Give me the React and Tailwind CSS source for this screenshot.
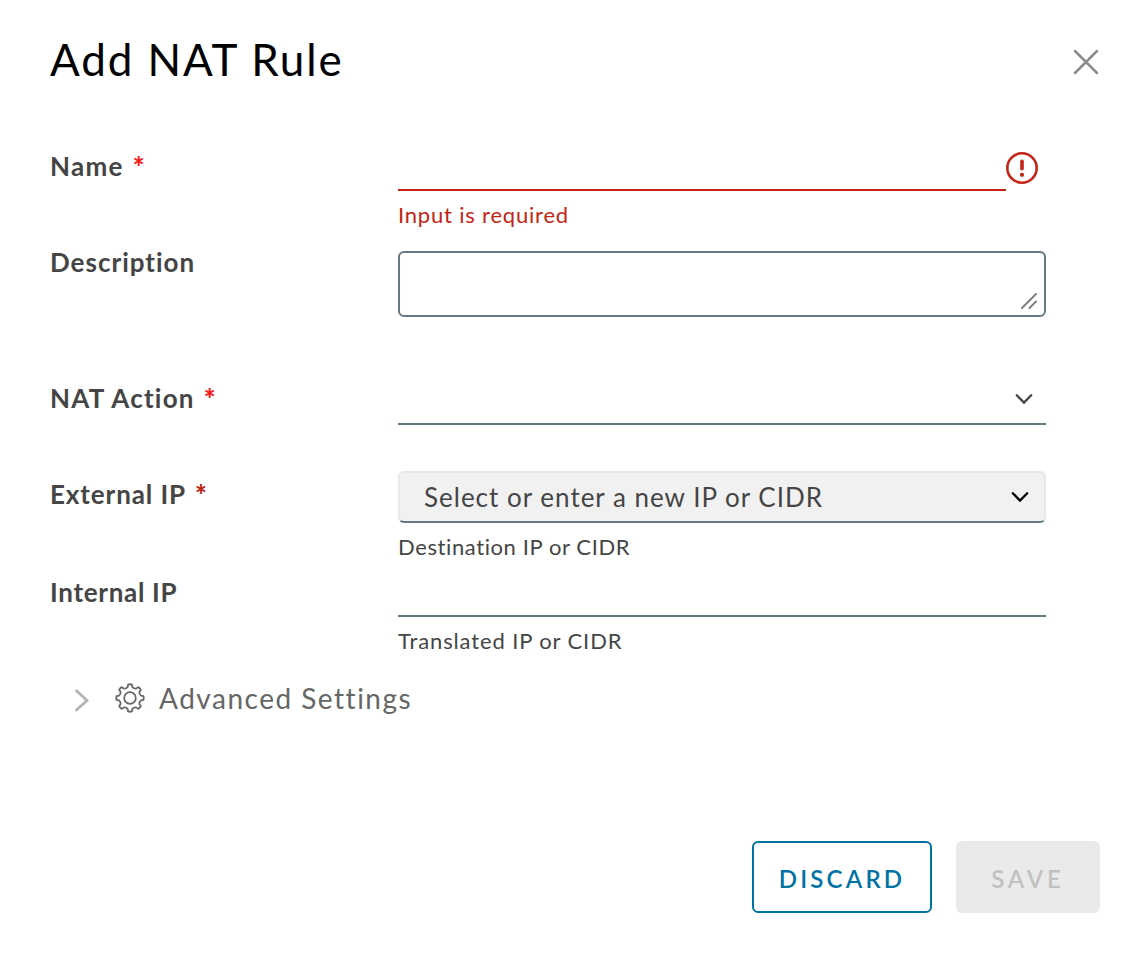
import React, { useState } from 'react';
import clsx from 'clsx';

// Outline of a cog with 8 rounded teeth, centred on 0,0
const cogPath = () => {
  const point = (radius, deg) => {
    const rad = (deg * Math.PI) / 180;
    return `${(radius * Math.sin(rad)).toFixed(2)} ${(-radius * Math.cos(rad)).toFixed(2)}`;
  };

  let d = `M${point(13.6, -8)}`;
  for (let i = 0; i < 8; i++) {
    const a = i * 45;
    d += `Q${point(14, a)} ${point(13.6, a + 8)}`;
    d += `L${point(11.2, a + 12)}`;
    d += `Q${point(9.9, a + 22.5)} ${point(11.2, a + 33)}`;
    d += `L${point(13.6, a + 37)}`;
  }
  return d + 'Z';
};

const CogIcon = () => (
  <svg className="w-[30px] h-[30px]" viewBox="-15 -15 30 30" fill="none" stroke="#666" strokeWidth="1.8" strokeLinejoin="round">
    <path d={cogPath()} />
    <circle r="5.8" />
  </svg>
);

const CloseIcon = () => (
  <svg className="w-7 h-7" viewBox="0 0 28 28" fill="none" stroke="#8c8c8c" strokeWidth="2.5" strokeLinecap="round">
    <path d="M3 3 25 25M25 3 3 25" />
  </svg>
);

const ErrorIcon = () => (
  <svg className="w-8 h-8 shrink-0" viewBox="0 0 32 32" fill="none" stroke="#c32416">
    <circle cx="16" cy="16" r="14.7" strokeWidth="2.6" />
    <path d="M16 9.3v7.4" strokeWidth="3.6" strokeLinecap="round" />
    <circle cx="16" cy="22.8" r="2.1" fill="#c32416" stroke="none" />
  </svg>
);

const ChevronDown = ({ className }) => (
  <svg className={clsx('w-5 h-5', className)} viewBox="0 0 20 20" fill="none" stroke="currentColor" strokeWidth="2.3" strokeLinecap="round">
    <path d="m2.8 6.3 7.2 7.2 7.2-7.2" />
  </svg>
);

const FormRow = ({ label, required, requiredColor = 'text-[#ff1a1a]', labelClass, className, children }) => (
  <div className={clsx('flex', className)}>
    <label className="w-[348px] h-[50px] shrink-0 flex items-center font-bold text-[26px] text-[#454545]">
      <span className={labelClass}>{label}</span>
      {required && <span className={clsx('ml-[9px] text-[28px] font-black', requiredColor)}>*</span>}
    </label>
    <div className="w-[648px]">{children}</div>
  </div>
);

const App = () => {
  const [open, setOpen] = useState(false);

  return (
    <div className="w-[1142px] h-[954px] bg-white px-[50px] font-['Lato',sans-serif]">
      <header className="h-[141px] pt-[29px] flex justify-between">
        <h1 className="h-[60px] leading-[60px] text-[44px] tracking-[1.9px] text-black whitespace-nowrap">Add NAT Rule</h1>
        <button className="w-7 h-7 mt-[19px] -mr-2" aria-label="Close">
          <CloseIcon />
        </button>
      </header>

      <FormRow label="Name" required labelClass="tracking-[1.3px]" className="h-[96px]">
        <div className="flex h-[50px]">
          <input className="w-[608px] h-[50px] border-b-2 border-[#c32416] outline-none" />
          <div className="pt-[11px]">
            <ErrorIcon />
          </div>
        </div>
        <p className="h-[50px] leading-[48px] text-[22px] tracking-[0.8px] text-[#c32416]">Input is required</p>
      </FormRow>

      <FormRow label="Description" labelClass="tracking-[1px]" className="h-[136px]">
        <div className="mt-[14px] h-[66px] border-2 border-[#667a84] rounded-md flex items-end justify-end py-[5px] pr-[6px]">
          <svg className="w-[18px] h-[18px]" viewBox="0 0 18 18" fill="none" stroke="#808080" strokeWidth="2" strokeLinecap="round">
            <path d="M2 16 16 2M9.5 16 16 9.5" />
          </svg>
        </div>
      </FormRow>

      <FormRow label="NAT Action" required labelClass="tracking-[1.2px]" className="h-[96px]">
        <div className="h-[52px] border-b-2 border-[#667a84] flex items-center justify-end pr-3 pt-[2px]">
          <ChevronDown className="text-[#454545]" />
        </div>
      </FormRow>

      <FormRow label="External IP" required requiredColor="text-[#c32416]" labelClass="tracking-[0.9px]" className="h-[98px]">
        <div className="mt-[2px] h-[52px] bg-[#f1f1f1] border-2 border-[#e8e8e8] border-b-[#667a84] rounded-md flex items-center justify-between pl-6 pr-[14px]">
          <span className="text-[26px] tracking-[1px] text-[#454545] whitespace-nowrap">Select or enter a new IP or CIDR</span>
          <ChevronDown className="text-black" />
        </div>
        <p className="h-[50px] leading-[48px] text-[22px] tracking-[0.6px] text-[#454545]">Destination IP or CIDR</p>
      </FormRow>

      <FormRow label="Internal IP" labelClass="tracking-[0.7px]" className="h-[100px]">
        <input className="block w-full h-[50px] border-b-2 border-[#667a84] outline-none" />
        <p className="h-[50px] leading-[48px] text-[22px] tracking-[0.88px] text-[#454545]">Translated IP or CIDR</p>
      </FormRow>

      <button className="h-[62px] flex items-center pl-[22px]" onClick={() => setOpen(!open)}>
        <svg className="w-5 h-6 mt-[3px]" viewBox="0 0 20 24" fill="none" stroke="#b3b3b3" strokeWidth="2.8" strokeLinecap="round">
          <path d="m4.5 2.8 10.5 9.7L4.5 22" />
        </svg>
        <span className="ml-[23px] mr-[14px]">
          <CogIcon />
        </span>
        <span className="text-[28px] tracking-[1.5px] text-[#666] whitespace-nowrap">Advanced Settings</span>
      </button>

      <footer className="mt-[112px] -mr-2 flex justify-end gap-6">
        <button className="w-[180px] h-[72px] pt-1 border-2 border-[#0072a3] rounded-md text-[24px] font-semibold tracking-[3.2px] text-[#0072a3]">
          DISCARD
        </button>
        <button className="w-[144px] h-[72px] pt-1 rounded-md bg-[#eaeaea] text-[24px] font-semibold tracking-[3.8px] text-[#c1c1c1]">
          SAVE
        </button>
      </footer>
    </div>
  );
};

export default App;
